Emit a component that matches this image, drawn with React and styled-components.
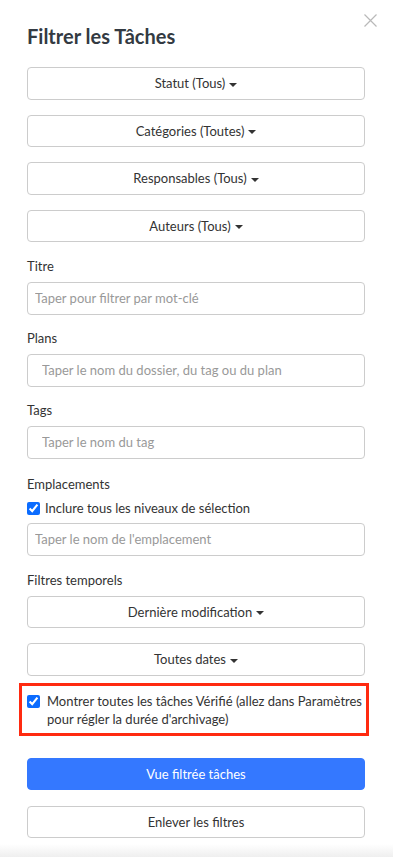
import React from 'react';
import styled, { createGlobalStyle } from 'styled-components';

const GlobalStyle = createGlobalStyle`
  body {
    margin: 0;
    background: #fff;
    font-family: Lato, "Noto Sans", sans-serif;
    font-size: 13px;
    color: #333;
  }
  * { box-sizing: border-box; }
`;

const Panel = styled.div`
  position: relative;
  width: 393px;
  padding: 24px 28px 0 27px;
`;

const Close = styled.button`
  position: absolute;
  top: 13px;
  right: 15px;
  width: 15px;
  height: 15px;
  padding: 0;
  border: 0;
  background: none;
  cursor: pointer;
`;

const Title = styled.h2`
  margin: 0 0 19px;
  font-size: 20px;
  line-height: 24px;
  font-weight: 700;
  color: #333a42;
`;

const Stack = styled.div`
  display: flex;
  flex-direction: column;
  gap: 15px;
`;

const DropButton = styled.button`
  width: 100%;
  height: 32.5px;
  border: 1px solid #ccc;
  border-radius: 4px;
  background: #fff;
  font-family: inherit;
  font-size: 13px;
  color: #333;
  padding: 0 12px;
  cursor: pointer;
`;

const Caret = styled.span`
  display: inline-block;
  margin-left: 4px;
  vertical-align: middle;
  border-top: 4px solid #333;
  border-left: 4px solid transparent;
  border-right: 4px solid transparent;
`;

const Group = styled.div`
  margin-top: ${({ $top }) => $top}px;
  display: flex;
  flex-direction: column;
`;

const Label = styled.label`
  font-size: 13px;
  line-height: 20px;
  margin-bottom: 6px;
  color: #333;
`;

const Input = styled.input`
  width: 100%;
  height: 32.5px;
  border: 1px solid #ccc;
  border-radius: 4px;
  padding: 0 ${({ $indent }) => ($indent ? 14 : 7)}px;
  font-family: inherit;
  font-size: 13px;
  color: #333;
  outline: none;
  &::placeholder { color: #999; }
`;

const CheckRow = styled.label`
  display: flex;
  align-items: center;
  font-size: 13px;
  line-height: 18px;
  margin-bottom: 6px;
  margin-top: -1px;
  input {
    margin: 0 5px 0 0;
    width: 13px;
    height: 13px;
    accent-color: #0b6cff;
  }
`;

const Highlight = styled.label`
  margin: 7px -4px 0 -8px;
  border: 3px solid #ff2a10;
  padding: 6px 0 5px 5px;
  display: flex;
  align-items: flex-start;
  gap: 7px;
  font-size: 13px;
  line-height: 18px;
  color: #333;
  input {
    margin: 3px 0 0 0;
    flex: none;
    width: 13px;
    height: 13px;
    accent-color: #0b6cff;
  }
`;

const Actions = styled.div`
  margin-top: 22px;
  display: flex;
  flex-direction: column;
  gap: 16px;
`;

const PrimaryButton = styled(DropButton)`
  height: 32px;
  background: #3478ff;
  border-color: #3478ff;
  color: #fff;
`;

const Fade = styled.div`
  margin-top: 6px;
  height: 16px;
  background: linear-gradient(#fff, #ebebeb);
`;

const dropdowns = ['Statut (Tous)', 'Catégories (Toutes)', 'Responsables (Tous)', 'Auteurs (Tous)'];

export default function App() {
  return (
    <>
      <GlobalStyle />
      <Panel>
        <Close aria-label="Fermer">
          <svg width="15" height="15" viewBox="0 0 15 15">
            <path d="M1.5 1.5 L13.5 13.5 M13.5 1.5 L1.5 13.5" stroke="#b9b9b9" strokeWidth="1.2" fill="none" />
          </svg>
        </Close>
        <Title>Filtrer les Tâches</Title>
        <Stack>
          {dropdowns.map((d) => (
            <DropButton key={d}>
              {d}<Caret />
            </DropButton>
          ))}
        </Stack>

        <Group $top={14}>
          <Label>Titre</Label>
          <Input placeholder="Taper pour filtrer par mot-clé" />
        </Group>
        <Group $top={13.5}>
          <Label>Plans</Label>
          <Input $indent placeholder="Taper le nom du dossier, du tag ou du plan" />
        </Group>
        <Group $top={13.5}>
          <Label>Tags</Label>
          <Input $indent placeholder="Taper le nom du tag" />
        </Group>
        <Group $top={15.5}>
          <Label>Emplacements</Label>
          <CheckRow>
            <input type="checkbox" defaultChecked />
            Inclure tous les niveaux de sélection
          </CheckRow>
          <Input placeholder="Taper le nom de l'emplacement" />
        </Group>
        <Group $top={14}>
          <Label>Filtres temporels</Label>
          <Stack>
            <DropButton>Dernière modification<Caret /></DropButton>
            <DropButton>Toutes dates<Caret /></DropButton>
          </Stack>
        </Group>

        <Highlight>
          <input type="checkbox" defaultChecked />
          <span>Montrer toutes les tâches Vérifié (allez dans Paramètres pour régler la durée d'archivage)</span>
        </Highlight>

        <Actions>
          <PrimaryButton>Vue filtrée tâches</PrimaryButton>
          <DropButton>Enlever les filtres</DropButton>
        </Actions>
      </Panel>
      <Fade />
    </>
  );
}
